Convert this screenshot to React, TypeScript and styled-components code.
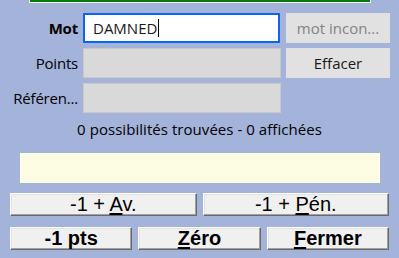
import React from "react";
import styled, { createGlobalStyle } from "styled-components";

const Global = createGlobalStyle`
  html, body { margin: 0; padding: 0; background: #a3b3da; }
  body { width: 399px; height: 258px; overflow: hidden; font-family: "Open Sans", "Noto Sans", sans-serif; }
`;

const Page = styled.div`
  width: 399px;
  height: 258px;
  display: flex;
  flex-direction: column;
  background: #a3b3da;
`;

const TopBar = styled.div`
  margin-left: 29px;
  width: 340px;
  height: 2px;
  background: #0b7a0b;
  border: 1px solid #f2f2f2;
  border-top: none;
`;

const Form = styled.div`
  display: grid;
  grid-template-columns: 78px 198px 104px;
  grid-auto-rows: 30px;
  column-gap: 5px;
  row-gap: 5px;
  margin-top: 10px;
`;

const Label = styled.div<{ $bold?: boolean }>`
  display: flex;
  align-items: center;
  justify-content: flex-end;
  font-family: "Open Sans", "Noto Sans", sans-serif;
  font-size: 15px;
  font-weight: ${(p) => (p.$bold ? 700 : 400)};
  color: #000;
  white-space: nowrap;
  letter-spacing: -0.2px;
`;

const Input = styled.div`
  box-sizing: border-box;
  border: 2px solid #0a64f0;
  background: #fff;
  display: flex;
  align-items: center;
  padding-left: 8px;
  font-size: 15px;
  color: #1a1a1a;
  width: 197px;
`;

const Caret = styled.span`
  display: inline-block;
  width: 1px;
  height: 18px;
  background: #000;
  margin-left: 1px;
`;

const Field = styled.div`
  box-sizing: border-box;
  border: 1px solid #c9c9c9;
  background: #d9d9d9;
`;

const FlatButton = styled.div<{ $disabled?: boolean }>`
  box-sizing: border-box;
  background: #e1e1e1;
  display: flex;
  align-items: center;
  justify-content: center;
  font-size: 15px;
  color: ${(p) => (p.$disabled ? "#838383" : "#1a1a1a")};
`;

const Status = styled.div`
  margin-top: 6px;
  text-align: center;
  font-size: 15px;
  letter-spacing: 0.05px;
  color: #000;
  height: 20px;
  line-height: 20px;
`;

const Note = styled.div`
  margin: 14px 19px 0 20px;
  height: 30px;
  background: #fdfde4;
`;

const ButtonRow = styled.div<{ $cols: number; $top: number }>`
  display: grid;
  grid-template-columns: repeat(${(p) => p.$cols}, 1fr);
  column-gap: 6px;
  margin: ${(p) => p.$top}px 10px 0 10px;
  width: 379px;
`;

const ClassicButton = styled.div<{ $bold?: boolean }>`
  box-sizing: border-box;
  height: 23px;
  background: #f0f0f0;
  border-top: 1px solid #ffffff;
  border-left: 1px solid #ffffff;
  border-right: 1px solid #696969;
  border-bottom: 1px solid #696969;
  box-shadow: inset -1px -1px 0 #a0a0a0, inset 1px 1px 0 #e3e3e3;
  display: flex;
  align-items: center;
  justify-content: center;
  font-family: "Liberation Sans", Arial, sans-serif;
  font-size: 20px;
  font-weight: ${(p) => (p.$bold ? 700 : 400)};
  color: #000;
  white-space: pre;
  u { text-decoration-thickness: ${(p) => (p.$bold ? "2px" : "1.5px")}; text-underline-offset: 2px; }
`;

export default function App() {
  return (
    <Page>
      <Global />
      <TopBar />
      <Form>
        <Label $bold>Mot</Label>
        <Input>
          DAMNED
          <Caret />
        </Input>
        <FlatButton $disabled>mot incon...</FlatButton>
        <Label>Points</Label>
        <Field />
        <FlatButton>Effacer</FlatButton>
        <Label>Référen...</Label>
        <Field />
        <div />
      </Form>
      <Status>0 possibilités trouvées - 0 affichées</Status>
      <Note />
      <ButtonRow $cols={2} $top={10}>
        <ClassicButton>
          <span>
            {"-1 + "}
            <u>A</u>v.
          </span>
        </ClassicButton>
        <ClassicButton>
          <span>
            {"-1 + "}
            <u>P</u>én.
          </span>
        </ClassicButton>
      </ButtonRow>
      <ButtonRow $cols={3} $top={11}>
        <ClassicButton $bold>-1 pts</ClassicButton>
        <ClassicButton $bold>
          <span>
            <u>Z</u>éro
          </span>
        </ClassicButton>
        <ClassicButton $bold>
          <span>
            <u>F</u>ermer
          </span>
        </ClassicButton>
      </ButtonRow>
    </Page>
  );
}
